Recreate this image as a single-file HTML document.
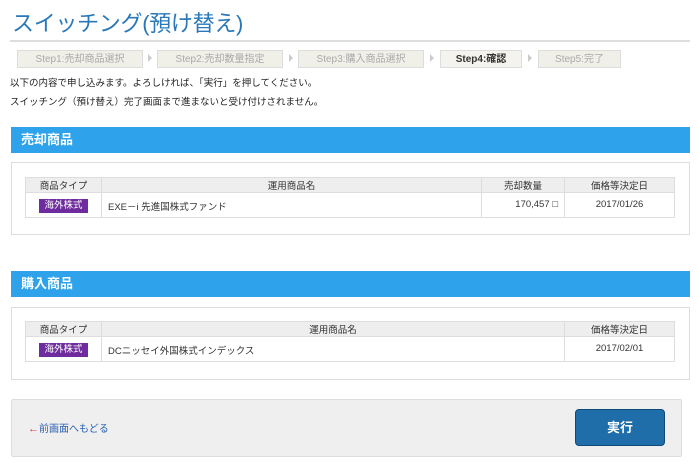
<html><head><style>
body{margin:0;width:700px;height:470px;background:#fff;font-family:"Liberation Sans","Noto Sans CJK JP",sans-serif;position:relative;overflow:hidden;color:#333}
.a{position:absolute}
h1{position:absolute;left:12px;top:6px;margin:0;font-size:22px;font-weight:normal;color:#2a78b8;letter-spacing:-0.3px}
.step{position:absolute;top:50px;height:18px;background:#f0efe8;border:1px solid #ddd;box-sizing:border-box;font-size:10px;color:#aaa;text-align:center;line-height:17px}
.arr{position:absolute;top:54px;width:0;height:0;border-left:4px solid #ccc;border-top:4px solid transparent;border-bottom:4px solid transparent}
.bar{position:absolute;left:11px;width:679px;height:26px;background:#2ea2ea;color:#fff;font-weight:bold;font-size:13px;line-height:26px;box-sizing:border-box;padding-left:10px}
.box{position:absolute;left:11px;width:679px;border:1px solid #ddd;box-sizing:border-box}
table{position:absolute;left:25px;width:650px;border-collapse:collapse;font-size:9.5px}
td{border:1px solid #ddd;padding:0 6px}
tr.h td{background:#eee;text-align:center;height:15px}
tr.d td{vertical-align:top;padding-top:6px}
tr.d td.t{vertical-align:middle;padding:2px 0 0;text-align:center}
.tag{display:inline-block;background:#6e2c9e;color:#fff;padding:0 5px;line-height:14px;font-size:9.5px}
</style></head><body>
<h1>スイッチング(預け替え)</h1>
<div class="a" style="left:10px;top:40px;width:680px;height:2px;background:#ddd"></div>
<div class="step" style="left:17px;width:126px">Step1:売却商品選択</div>
<div class="arr" style="left:148px"></div>
<div class="step" style="left:157px;width:126px">Step2:売却数量指定</div>
<div class="arr" style="left:289px"></div>
<div class="step" style="left:298px;width:126px">Step3:購入商品選択</div>
<div class="arr" style="left:430px"></div>
<div class="step" style="left:440px;width:82px;color:#333;font-weight:bold;background:#f4f3ee">Step4:確認</div>
<div class="arr" style="left:528px"></div>
<div class="step" style="left:538px;width:83px">Step5:完了</div>
<div class="a" style="left:10px;top:74px;font-size:9.5px;line-height:19px;color:#222">以下の内容で申し込みます。よろしければ、「実行」を押してください。<br>スイッチング（預け替え）完了画面まで進まないと受け付けされません。</div>
<div class="bar" style="top:127px">売却商品</div>
<div class="box" style="top:162px;height:73px"></div>
<table style="top:177px">
<tr class="h"><td style="width:63px">商品タイプ</td><td>運用商品名</td><td style="width:70px">売却数量</td><td style="width:97px">価格等決定日</td></tr>
<tr class="d" style="height:25px"><td class="t"><span class="tag">海外株式</span></td><td>EXE－i 先進国株式ファンド</td><td style="text-align:right">170,457 □</td><td style="text-align:center">2017/01/26</td></tr>
</table>
<div class="bar" style="top:271px">購入商品</div>
<div class="box" style="top:307px;height:73px"></div>
<table style="top:321px">
<tr class="h"><td style="width:63px">商品タイプ</td><td>運用商品名</td><td style="width:97px">価格等決定日</td></tr>
<tr class="d" style="height:25px"><td class="t"><span class="tag">海外株式</span></td><td>DCニッセイ外国株式インデックス</td><td style="text-align:center">2017/02/01</td></tr>
</table>
<div class="a" style="left:11px;top:399px;width:671px;height:58px;background:#efefef;border:1px solid #ddd;box-sizing:border-box;border-radius:2px"></div>
<div class="a" style="left:28px;top:420px;font-size:10px;color:#2a5fb0"><span style="color:#e33;font-size:11px">←</span>前画面へもどる</div>
<div class="a" style="left:575px;top:409px;width:90px;height:37px;background:#1f6ea9;border:1px solid #0d4a7a;box-sizing:border-box;border-radius:4px;color:#fff;font-weight:bold;font-size:13px;text-align:center;line-height:35px">実行</div>
</body></html>
